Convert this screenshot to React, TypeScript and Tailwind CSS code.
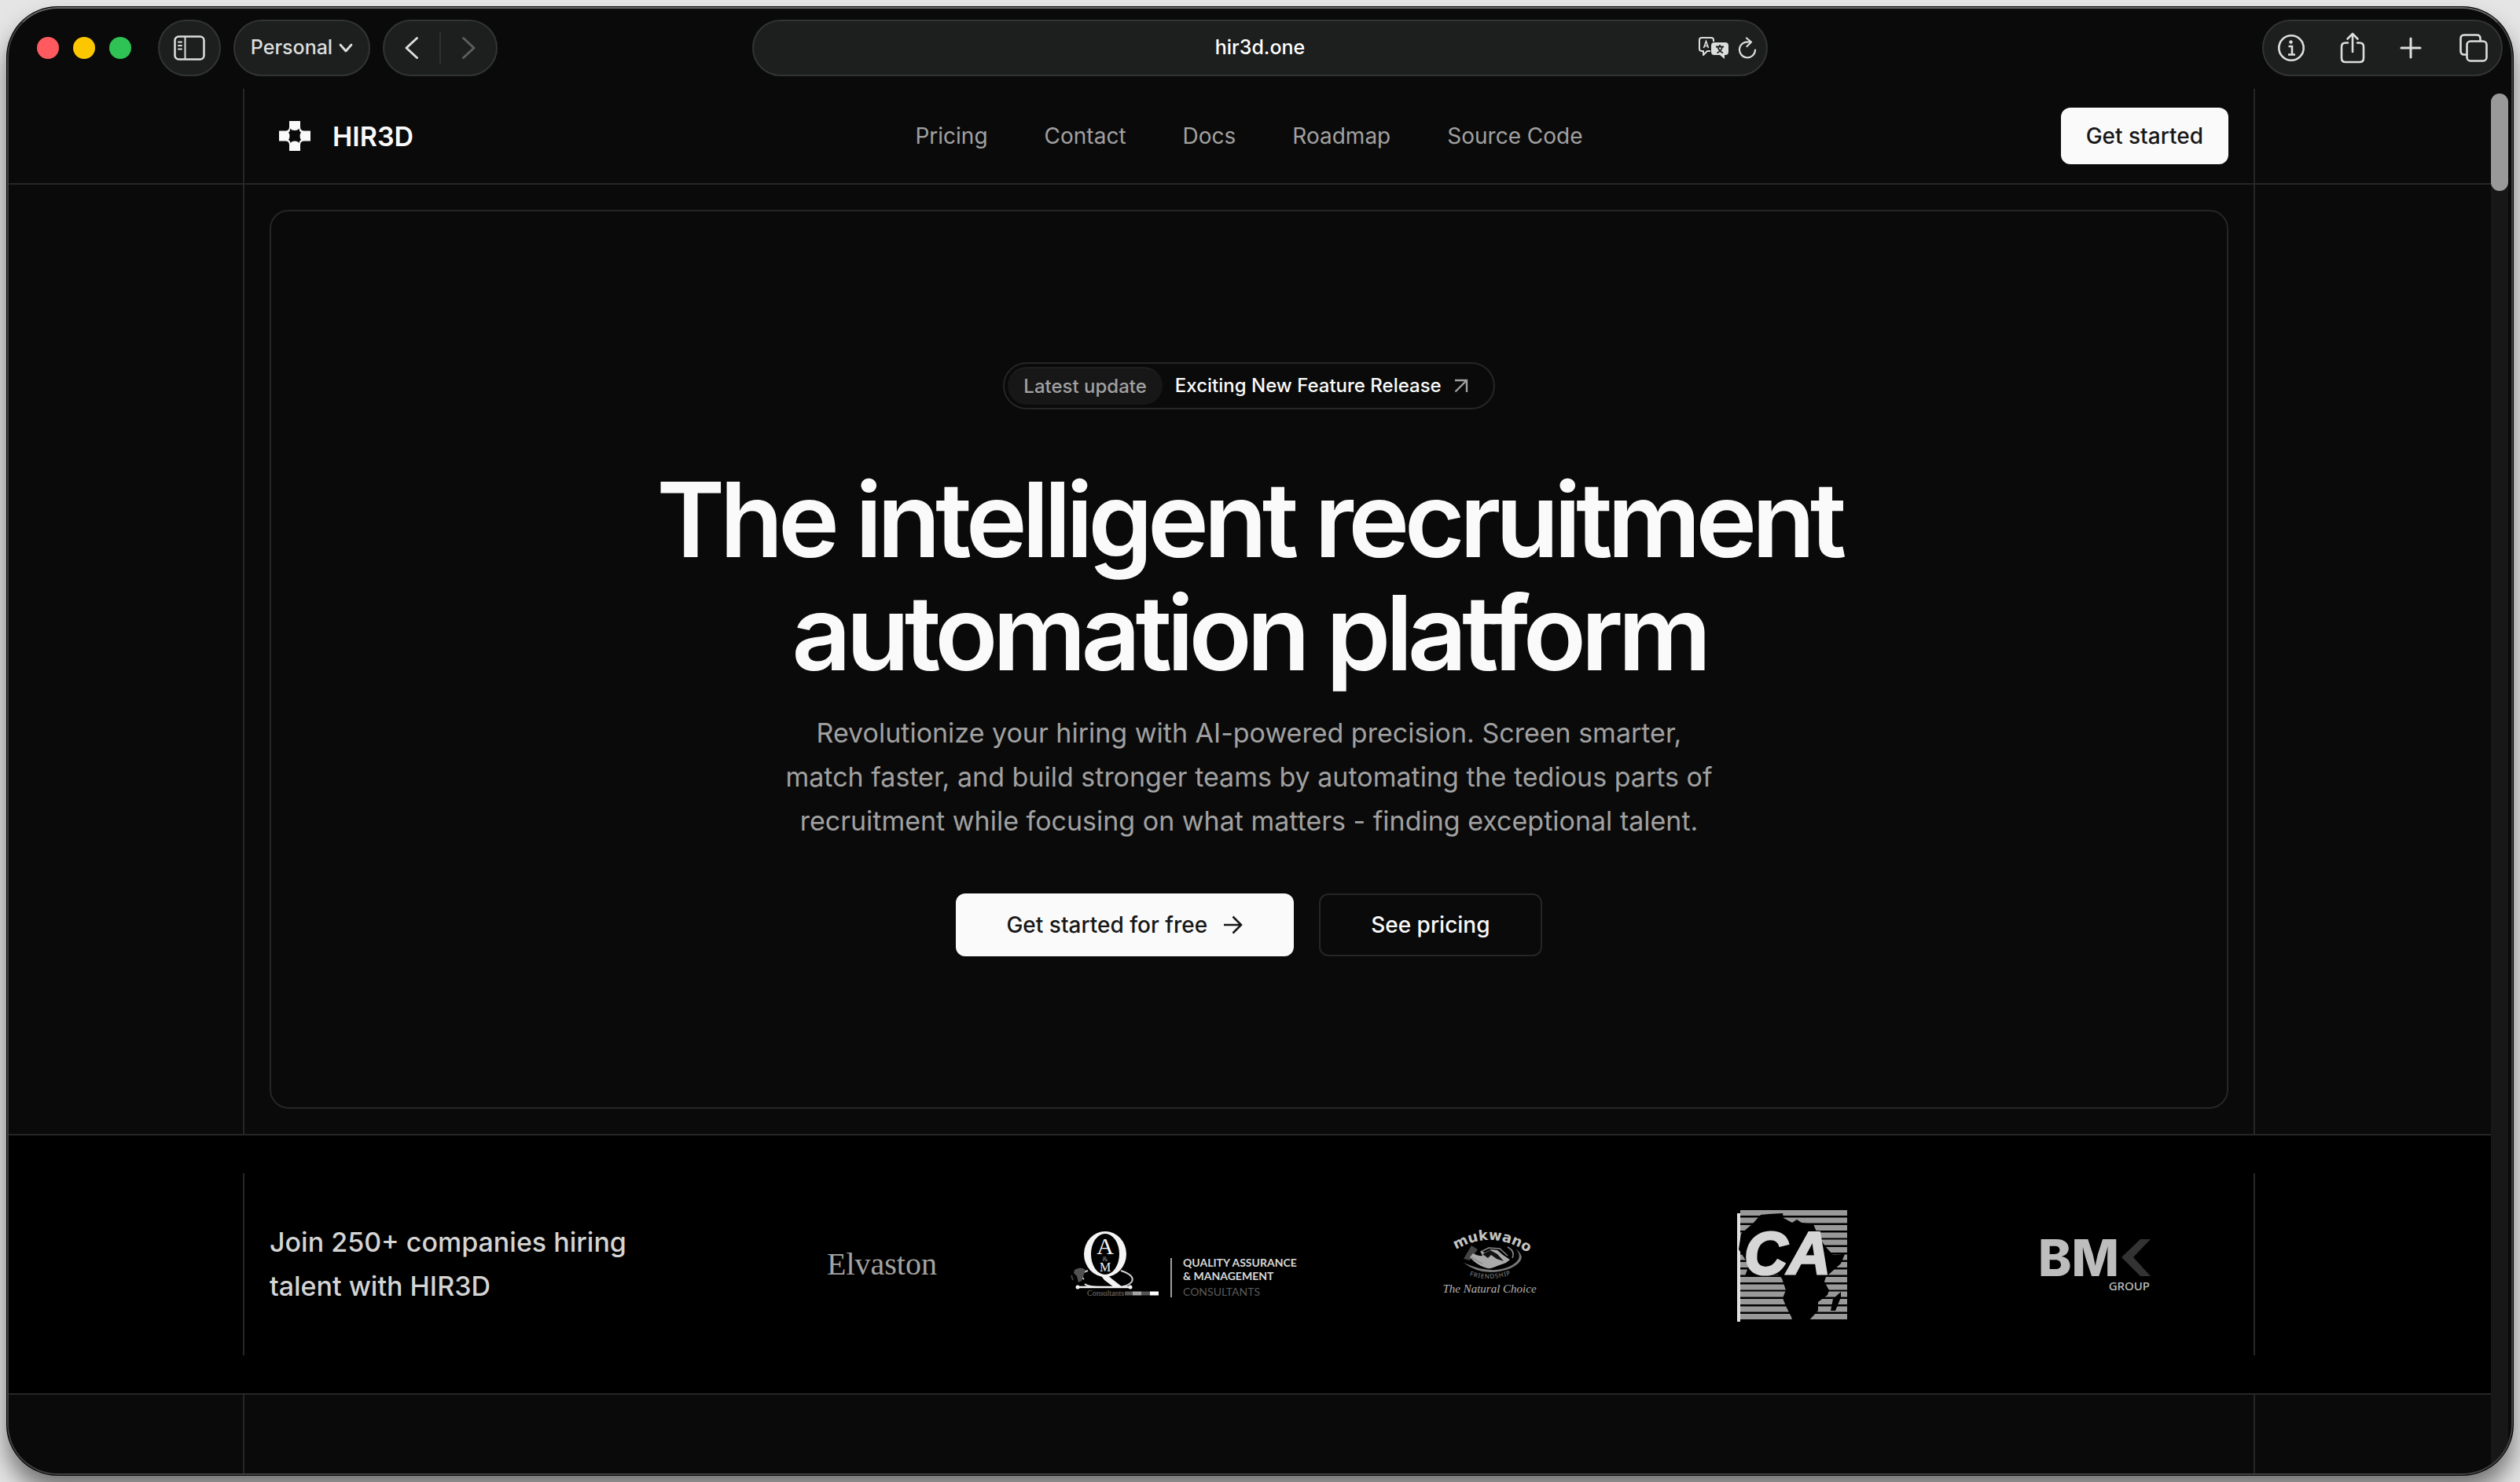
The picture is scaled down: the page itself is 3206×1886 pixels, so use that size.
import React from "react";

const navLinks = ["Pricing", "Contact", "Docs", "Roadmap", "Source Code"];

const Pill: React.FC<{ className?: string; children: React.ReactNode }> = ({ className, children }) => (
    <div className={`flex h-[72px] shrink-0 items-center rounded-full border-2 border-[#323433] bg-[#1d1f1e] ${className ?? ""}`}>
        {children}
    </div>
);

/* Browser toolbar */
const Toolbar = () => (
    <div className="grid h-[104px] grid-cols-[1fr_1292px_1fr] items-center font-medium text-[#dcdede]">
        <div className="flex items-center gap-4 pl-[38px]">
            <div className="mr-[18px] flex gap-[18px]">
                <button aria-label="Close" className="size-7 rounded-full bg-[#ff5a5f]" />
                <button aria-label="Minimize" className="size-7 rounded-full bg-[#fdc700]" />
                <button aria-label="Zoom" className="size-7 rounded-full bg-[#2fc254]" />
            </div>
            <Pill className="w-20 justify-center">
                <button aria-label="Sidebar">
                    <svg className="h-8 w-10" viewBox="0 0 40 32" fill="none" stroke="currentColor" strokeWidth="2.5" strokeLinecap="round">
                        <rect x="1.5" y="1.5" width="37" height="29" rx="5" />
                        <path d="M14.500 2v28M6 8.500h4M6 13h4M6 17.500h4" strokeWidth="2" />
                    </svg>
                </button>
            </Pill>
            <Pill className="w-[174px] justify-center">
                <button className="flex items-center gap-2 text-[25px]">
                    Personal
                    <svg className="h-3 w-[18px]" viewBox="0 0 18 12" fill="none" stroke="currentColor" strokeWidth="2.8" strokeLinecap="round" strokeLinejoin="round">
                        <path d="M2 2l7 8 7-8" />
                    </svg>
                </button>
            </Pill>
            <Pill className="w-[146px]">
                <button aria-label="Back" className="flex flex-1 justify-center">
                    <svg className="h-8 w-5" viewBox="0 0 20 32" fill="none" stroke="currentColor" strokeWidth="3" strokeLinecap="round" strokeLinejoin="round">
                        <path d="M16.500 3.500L3 16l13.500 12.500" />
                    </svg>
                </button>
                <span className="h-10 w-[2px] bg-[#2f3131]" />
                <button aria-label="Forward" className="flex flex-1 justify-center text-[#5c5e5e]">
                    <svg className="h-8 w-5" viewBox="0 0 20 32" fill="none" stroke="currentColor" strokeWidth="3" strokeLinecap="round" strokeLinejoin="round">
                        <path d="M3.500 3.500L17 16 3.500 28.500" />
                    </svg>
                </button>
            </Pill>
        </div>

        <Pill className="relative">
            <input
                aria-label="Address"
                defaultValue="hir3d.one"
                className="w-full bg-transparent text-center text-[25px] text-white outline-none"
            />
            <div className="absolute right-3 flex items-center gap-3">
                <button aria-label="Translate">
                    <svg className="h-7 w-[38px]" viewBox="0 0 38 28" fill="none">
                        <path d="M19 6V4q0-3-3-3H4Q1 1 1 4v11q0 3 3 3h2v5l5-5h4" stroke="currentColor" strokeWidth="2" strokeLinejoin="round" />
                        <path d="M20 7h14q4 0 4 4v8q0 4-4 4h-1v5l-6-5h-7q-4 0-4-4v-8q0-4 4-4z" fill="currentColor" />
                        <path d="M6.500 14L9.500 5.500l3 8.500M7.500 11.500h4" stroke="currentColor" strokeWidth="1.6" />
                        <path d="M22 12.500h10M27 10v2.500M23.500 20.500q6-3 6.500-8M24.500 13q1.500 5 6.500 7.500" stroke="#1d1f1e" strokeWidth="1.8" />
                    </svg>
                </button>
                <button aria-label="Reload">
                    <svg className="h-7 w-6" viewBox="0 0 24 28" fill="none" stroke="currentColor" strokeWidth="2.2" strokeLinecap="round" strokeLinejoin="round">
                        <path d="M14 6.500A10 10 0 1 0 22 16.500M11 1.500l6 5-5.500 5.500" />
                    </svg>
                </button>
            </div>
        </Pill>

        <div className="flex justify-end pr-[13px]">
            <Pill className="w-[306px] gap-11 pl-[17px]">
                <button aria-label="Page info">
                    <svg className="size-9" viewBox="0 0 36 36" fill="none" stroke="currentColor" strokeWidth="2.6">
                        <circle cx="18" cy="18" r="15.7" />
                        <circle cx="17.500" cy="10.500" r="2.200" fill="currentColor" stroke="none" />
                        <path d="M14.500 16H19v10M14 26.500h9" />
                    </svg>
                </button>
                <button aria-label="Share">
                    <svg className="h-10 w-8" viewBox="0 0 32 40" fill="none" stroke="currentColor" strokeWidth="2.6" strokeLinecap="round" strokeLinejoin="round">
                        <path d="M10 13.500H7q-5 0-5 5V33q0 5 5 5h18q5 0 5-5V18.500q0-5-5-5h-3M16 25V2.500M9.500 8.500l6.500-6.500 6.500 6.500" />
                    </svg>
                </button>
                <button aria-label="New tab">
                    <svg className="size-7" viewBox="0 0 28 28" stroke="currentColor" strokeWidth="3" strokeLinecap="round">
                        <path d="M14 2v24M2 14h24" />
                    </svg>
                </button>
                <button aria-label="Tab overview" className="ml-1">
                    <svg className="size-9" viewBox="0 0 36 36" fill="none" stroke="currentColor" strokeWidth="2.6">
                        <rect x="9.500" y="9.500" width="25" height="25" rx="4.500" />
                        <path d="M9 26.500H6Q1.500 26.500 1.500 22V6Q1.500 1.500 6 1.500h16Q26.500 1.500 26.500 6v3" />
                    </svg>
                </button>
            </Pill>
        </div>
    </div>
);

const Header = () => (
    <header className="border-b-2 border-[#262626]">
        <div className="mx-auto grid h-[120px] w-full max-w-[2560px] grid-cols-[1fr_auto_1fr] items-center border-x-2 border-[#262626] px-8">
            <a href="#home" className="flex items-center gap-7 pl-3 text-[34px] font-semibold text-[#fafafa]">
                <svg className="h-[38px] w-10" viewBox="0 0 40 38" fill="currentColor" fillRule="evenodd">
                    <path d="M13 0h14v7.500q0 5 5 5h8v13h-8q-5 0-5 5V38H13v-7.500q0-5-5-5H0v-13h8q5 0 5-5zM14 9.500q.5 3.500-2 5v0q1.500 1.500 1.500 4.500t-1.500 5q2.500 1 2.500 4 1.500-2.500 5.500-2.500t5.500 2.500q0-2.500 2.500-4-1.500-2-1.500-5t1.500-4.500q-2.500-1.500-2.500-5-1.500 2.500-5.500 2.500t-6-2.500z" />
                </svg>
                HIR3D
            </a>
            <nav className="flex gap-[72px] text-[28px] text-[#a1a1a1]">
                {navLinks.map((link) => (
                    <a key={link} href="#nav">{link}</a>
                ))}
            </nav>
            <button className="h-[72px] justify-self-end rounded-xl bg-[#fafafa] px-8 text-[28px] font-medium text-[#171717]">
                Get started
            </button>
        </div>
    </header>
);

const Hero = () => (
    <section className="mx-auto w-full max-w-[2560px] border-x-2 border-[#262626] p-8">
        <div className="flex flex-col items-center rounded-3xl border-2 border-[#262626] py-48 text-center">
            <a href="#update" className="flex h-[60px] items-center rounded-full border-2 border-[#262626] p-1 pr-8 text-[24px] font-medium text-[#fafafa]">
                <span className="flex h-12 items-center rounded-full border-t-2 border-[#202020] bg-[#171717] px-5 text-[#a1a1a1]">Latest update</span>
                <span className="ml-4">Exciting New Feature Release</span>
                <svg className="ml-4 size-[18px] text-[#a1a1a1]" viewBox="0 0 18 18" fill="none" stroke="currentColor" strokeWidth="2.400">
                    <path d="M1 2h15v15M16 2L1.500 16.500" />
                </svg>
            </a>
            <h1 className="mt-[68px] max-w-[1600px] text-[132px] leading-[144px] font-semibold tracking-tighter text-[#fafafa]">
                The intelligent recruitment automation platform
            </h1>
            <p className="mt-7 max-w-[1200px] text-[34px] leading-[56px] text-[#a1a1a1]">
                Revolutionize your hiring with AI-powered precision. Screen smarter, match faster, and build stronger teams by
                automating the tedious parts of recruitment while focusing on what matters - finding exceptional talent.
            </p>
            <div className="mt-16 flex gap-8 text-[28px] font-medium">
                <button className="flex h-20 items-center gap-5 rounded-xl bg-[#fafafa] px-16 text-[#171717]">
                    Get started for free
                    <svg className="h-6 w-[26px]" viewBox="0 0 26 24" fill="none" stroke="currentColor" strokeWidth="2.600">
                        <path d="M1 12h21M12.500 1.500L23 12 12.500 22.500" />
                    </svg>
                </button>
                <button className="h-20 rounded-xl border-2 border-[#262626] px-16 text-[#fafafa]">See pricing</button>
            </div>
        </div>
    </section>
);

const QualityLogo = () => (
    <svg className="h-[92px] w-[292px]" viewBox="0 0 292 92">
        <g fill="#f4f4f4" className="font-['Liberation_Serif']">
            <path fillRule="evenodd" d="M44 4a27 29 0 1 1 0 58a27 29 0 1 1 0-58zM44 7a18 26 0 1 0 0 52a18 26 0 1 0 0-52z" />
            <path d="M38 60q9-1 14 4l14 11H55L43 66q-2-3-5-6z" />
            <path d="M22 54q-13 4-5 11M18 71q4 4 22 4M64 54q18 6 14 14-5 7-20 7" fill="none" stroke="#d0d0d0" strokeWidth="2" />
            <text x="44" y="33" fontSize="30" textAnchor="middle">A</text>
            <text x="44" y="42" fontSize="9" textAnchor="middle" fill="#999">&amp;</text>
            <text x="44" y="55" fontSize="16" textAnchor="middle">M</text>
            <path d="M8 75h70" stroke="#f4f4f4" strokeWidth="2.500" />
            <circle cx="9" cy="75" r="2.500" />
            <circle cx="76" cy="75" r="2.500" />
            <path d="M5 53q8-5 14 0l-2 6-3 8-4 2-2-8-4-4z" fill="#505050" />
            <path d="M1 60l2 6" stroke="#404040" strokeWidth="2" />
            <text x="21" y="86" fontSize="10" fill="#777">Consultants</text>
        </g>
        <path d="M69 83h10" stroke="#555" strokeWidth="5" />
        <path d="M79 83h11" stroke="#a5a5a5" strokeWidth="5" />
        <path d="M90 83h11" stroke="#555" strokeWidth="5" />
        <path d="M101 83h11" stroke="#fff" strokeWidth="5" />
        <path d="M128 38v50" stroke="#a0a0a0" strokeWidth="2" />
        <g className="font-['Lato']" fontSize="14">
            <text x="143" y="49" fill="#d8d8d8" fontWeight="700">QUALITY ASSURANCE</text>
            <text x="143" y="66" fill="#d8d8d8" fontWeight="700">&amp; MANAGEMENT</text>
            <text x="143" y="86" fill="#5a5a5a">CONSULTANTS</text>
        </g>
    </svg>
);

const MukwanoLogo = () => (
    <svg className="h-[92px] w-[136px]" viewBox="-8 -4 136 92">
        <defs>
            <path id="mukwano-top" d="M14 26Q64-6 114 30" />
            <path id="mukwano-bottom" d="M22 51Q62 70 102 49" />
        </defs>
        <text fill="#c4c4c4" fontSize="18" className="font-['DejaVu_Sans'] font-bold">
            <textPath href="#mukwano-top" startOffset="50%" textAnchor="middle">mukwano</textPath>
        </text>
        <path d="M94 22q12 12-6 22-24 12-60-4 26 20 60 7 24-12 6-25z" fill="#777" />
        <path d="M38 18l8 5-10 14-8-2z" fill="#444" />
        <path d="M40 28q8 4 12 3l-3-6 6 2 8-4 8 1 7 6 9 6-5 4-11 4q-10 5-16 2-10-3-19-13z" fill="#aaa" />
        <path d="M38 33q10 7 14 8M50 26l10-5 14 1 10 9M84 20q10 5 6 14" fill="none" stroke="#888" strokeWidth="1.500" />
        <path d="M52 29l10-5 9 5 8 9-9-3-7-5-4 4z" fill="#111" />
        <text fill="#8a8a8a" fontSize="8" className="font-['Noto_Sans'] tracking-widest">
            <textPath href="#mukwano-bottom" startOffset="50%" textAnchor="middle">FRIENDSHIP</textPath>
        </text>
        <text x="61" y="78" fill="#b4b4b4" fontSize="15" textAnchor="middle" className="font-['Liberation_Serif'] italic">The Natural Choice</text>
    </svg>
);

const AfricaLogo = () => (
    <svg className="h-[146px] w-[140px]" viewBox="0 0 140 146">
        <path d="M4 7.500h136M4 17h136M4 26.500h136M4 36h136M4 45h136M4 54.500h136M4 64h136M4 73.500h136M4 83h136M4 92.500h136M4 102h136M4 111h136M4 120.500h136M4 130h136M4 139.500h136" stroke="#999" strokeWidth="7" />
        <path d="M2 8v138" stroke="#e0e0e0" strokeWidth="4" />
        <path d="M20 21L30 10l10-1 18-1 1 6 11 6 6-4 6 4 15 2 6 14 9 14 10 11 15-1-5 12-19 17-2 6 6 11-2 6-12 9 0 11-15 16H71l-2-8-7-14-4-10 4-10-5-15-5-5-42 2 5-14L2 54l3-20z" fill="#000" />
        <path d="M132 108l0 7-7 17-6 0 3-15z" fill="#000" />
        <text x="64" y="85" fill="#d6d6d6" stroke="#d6d6d6" strokeWidth="3" fontSize="76" textAnchor="middle" className="font-['Liberation_Sans'] font-bold italic">CA</text>
    </svg>
);

const BmkLogo = () => (
    <svg className="h-[70px] w-[142px]" viewBox="0 0 142 70">
        <text x="-2" y="50" fill="#bdbdbd" fontSize="64" className="font-['Inter'] font-extrabold">BM</text>
        <path d="M128 3h13L119 26l22 24h-13L104 26z" fill="#333" />
        <text x="140" y="68" fill="#bdbdbd" fontSize="15" textAnchor="end" className="font-['Noto_Sans'] font-medium">GROUP</text>
    </svg>
);

const Companies = () => (
    <section className="border-y-2 border-[#262626] bg-black py-12">
        <div className="mx-auto flex h-[232px] w-full max-w-[2560px] items-center gap-32 border-x-2 border-[#262626] px-8">
            <h2 className="w-[482px] text-[34px] leading-[56px] font-medium text-[#d4d4d4]">
                Join 250+ companies hiring talent with HIR3D
            </h2>
            <div className="grid flex-1 grid-cols-5 items-center justify-items-center gap-12">
                <span className="font-['Liberation_Serif'] text-[40px] text-[#a3a3a3]">Elvaston</span>
                <QualityLogo />
                <MukwanoLogo />
                <AfricaLogo />
                <BmkLogo />
            </div>
        </div>
    </section>
);

export default function App() {
    return (
        <div className="flex min-h-screen bg-[#e5e5e5] p-[9px] font-['Inter',sans-serif]">
            <div className="relative flex flex-1 flex-col overflow-hidden rounded-[64px] bg-[#0a0a0a] shadow-[0_0_0_1px_#000,0_20px_30px_rgba(0,0,0,0.5)]">
                <Toolbar />
                <div className="flex flex-1">
                    <main className="flex flex-1 flex-col">
                        <Header />
                        <Hero />
                        <Companies />
                        <div className="mx-auto w-full max-w-[2560px] flex-1 border-x-2 border-[#262626]" />
                    </main>
                    {/* Scrollbar */}
                    <div className="mt-[6px] mr-[6px] w-[22px] rounded-t-full bg-[#171717]">
                        <div className="h-[124px] rounded-full bg-[#999]" />
                    </div>
                </div>
                {/* Window edge */}
                <div className="pointer-events-none absolute inset-0 rounded-[64px] border-2 border-[#404040] border-t-[#666]" />
            </div>
        </div>
    );
}
